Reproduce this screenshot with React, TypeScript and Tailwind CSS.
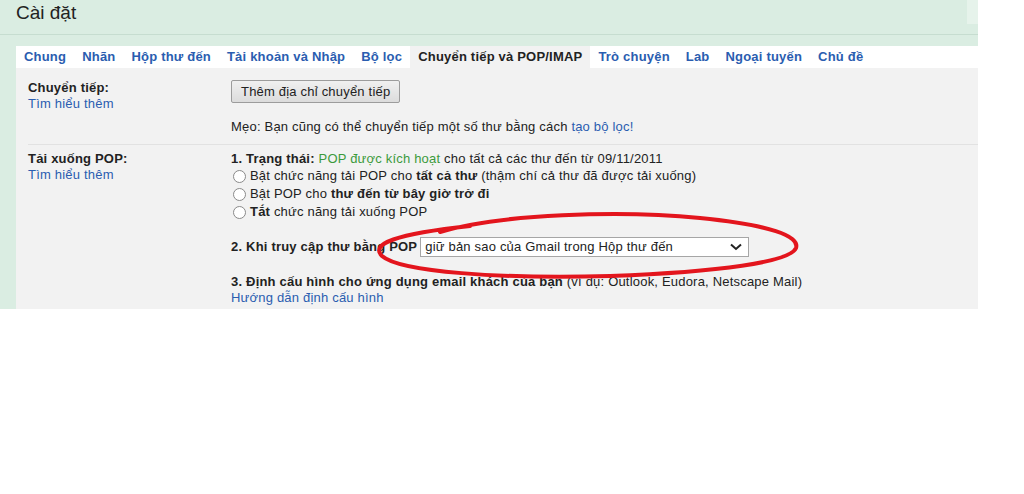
import React from 'react';

const tabs = [
  'Chung',
  'Nhãn',
  'Hộp thư đến',
  'Tài khoản và Nhập',
  'Bộ lọc',
  'Chuyển tiếp và POP/IMAP',
  'Trò chuyện',
  'Lab',
  'Ngoại tuyến',
  'Chủ đề',
];

const Radio = ({ children }: { children: React.ReactNode }) => (
  <label className="flex items-center h-[18px]">
    <span className="inline-block w-[13px] h-[13px] rounded-full border border-[#8a8a8a] bg-white mr-[4px] ml-[2px]" />
    <span>{children}</span>
  </label>
);

export default function App() {
  return (
    <div className="relative w-[1024px] h-[494px] bg-white text-[13px] text-[#222] tracking-[0.2px] font-['Liberation_Sans',Arial,sans-serif]">
      <div className="w-[978px] bg-[#daede2]">
        {/* header */}
        <div className="flex h-[35px] border-b border-[#c6ddd0]">
          <h1 className="flex-1 pl-[16px] pt-[1px] text-[19px] leading-[24px] tracking-normal text-[#222]">Cài đặt</h1>
          <div className="w-[11px] h-[24px] bg-[#e6f3eb]" />
        </div>
        <div className="h-[11px]" />

        <div className="flex">
          <div className="w-[16px] shrink-0" />
          <div className="flex-1">
            {/* tabs */}
            <div className="flex h-[22px] bg-white font-bold tracking-[0.2px]">
              {tabs.map((t) => (
                <div
                  key={t}
                  className={
                    t === 'Chuyển tiếp và POP/IMAP'
                      ? 'px-[8px] leading-[22px] bg-[#f2f2f2] text-[#222]'
                      : 'px-[8px] leading-[22px] text-[#2a5db0]'
                  }
                >
                  {t}
                </div>
              ))}
            </div>

            {/* content */}
            <div className="bg-[#f2f2f2] pl-[12px] leading-[16px]">
              <div className="flex pt-[12px] pb-[9px] border-b border-[#e2e2e2]">
                <div className="w-[203px] shrink-0">
                  <div className="font-bold">Chuyển tiếp:</div>
                  <div className="text-[#2a5db0]">Tìm hiểu thêm</div>
                </div>
                <div>
                  <button className="h-[23px] px-[9px] border border-[#9c9c9c] bg-gradient-to-b from-[#f0f0f0] to-[#dcdcdc] text-[13px] tracking-[0.2px] text-[#222] rounded-[2px]">
                    Thêm địa chỉ chuyển tiếp
                  </button>
                  <div className="mt-[16px]">
                    Mẹo: Bạn cũng có thể chuyển tiếp một số thư bằng cách{' '}
                    <span className="text-[#2a5db0]">tạo bộ lọc!</span>
                  </div>
                </div>
              </div>

              <div className="flex pt-[6px] pb-[3px]">
                <div className="w-[203px] shrink-0">
                  <div className="font-bold">Tải xuống POP:</div>
                  <div className="text-[#2a5db0]">Tìm hiểu thêm</div>
                </div>
                <div>
                  <div>
                    <b>1. Trạng thái: </b>
                    <span className="text-[#3c9a3c]">POP được kích hoạt</span> cho tất cả các thư đến từ 09/11/2011
                  </div>
                  <Radio>
                    Bật chức năng tải POP cho <b>tất cả thư</b> (thậm chí cả thư đã được tải xuống)
                  </Radio>
                  <Radio>
                    Bật POP cho <b>thư đến từ bây giờ trở đi</b>
                  </Radio>
                  <Radio>
                    <b>Tắt</b> chức năng tải xuống POP
                  </Radio>

                  <div className="flex items-center mt-[16px]">
                    <b>2. Khi truy cập thư bằng POP</b>
                    <div className="ml-[3px] flex items-center justify-between w-[329px] h-[20px] border border-[#a6a6a6] bg-white pl-[4px] pr-[6px]">
                      <span>giữ bản sao của Gmail trong Hộp thư đến</span>
                      <svg width="12" height="8" viewBox="0 0 12 8">
                        <path d="M1 1.5 L6 6 L11 1.5" fill="none" stroke="#222" strokeWidth="2" />
                      </svg>
                    </div>
                  </div>

                  <div className="mt-[17px]">
                    <b>3. Định cấu hình cho ứng dụng email khách của bạn</b> (ví dụ: Outlook, Eudora, Netscape Mail)
                  </div>
                  <div className="text-[#2a5db0]">Hướng dẫn định cấu hình</div>
                </div>
              </div>
            </div>
          </div>
        </div>
      </div>

      {/* hand-drawn red ellipse */}
      <svg className="absolute left-0 top-0 pointer-events-none" width="1024" height="494">
        <path
          d="M440 232 C500 214 620 210 700 218 C770 225 800 236 796 248 C790 262 720 272 610 276 C500 279 400 272 382 256 C370 244 395 234 470 226"
          fill="none"
          stroke="#e3151d"
          strokeWidth="4"
          strokeLinecap="round"
        />
      </svg>
    </div>
  );
}
